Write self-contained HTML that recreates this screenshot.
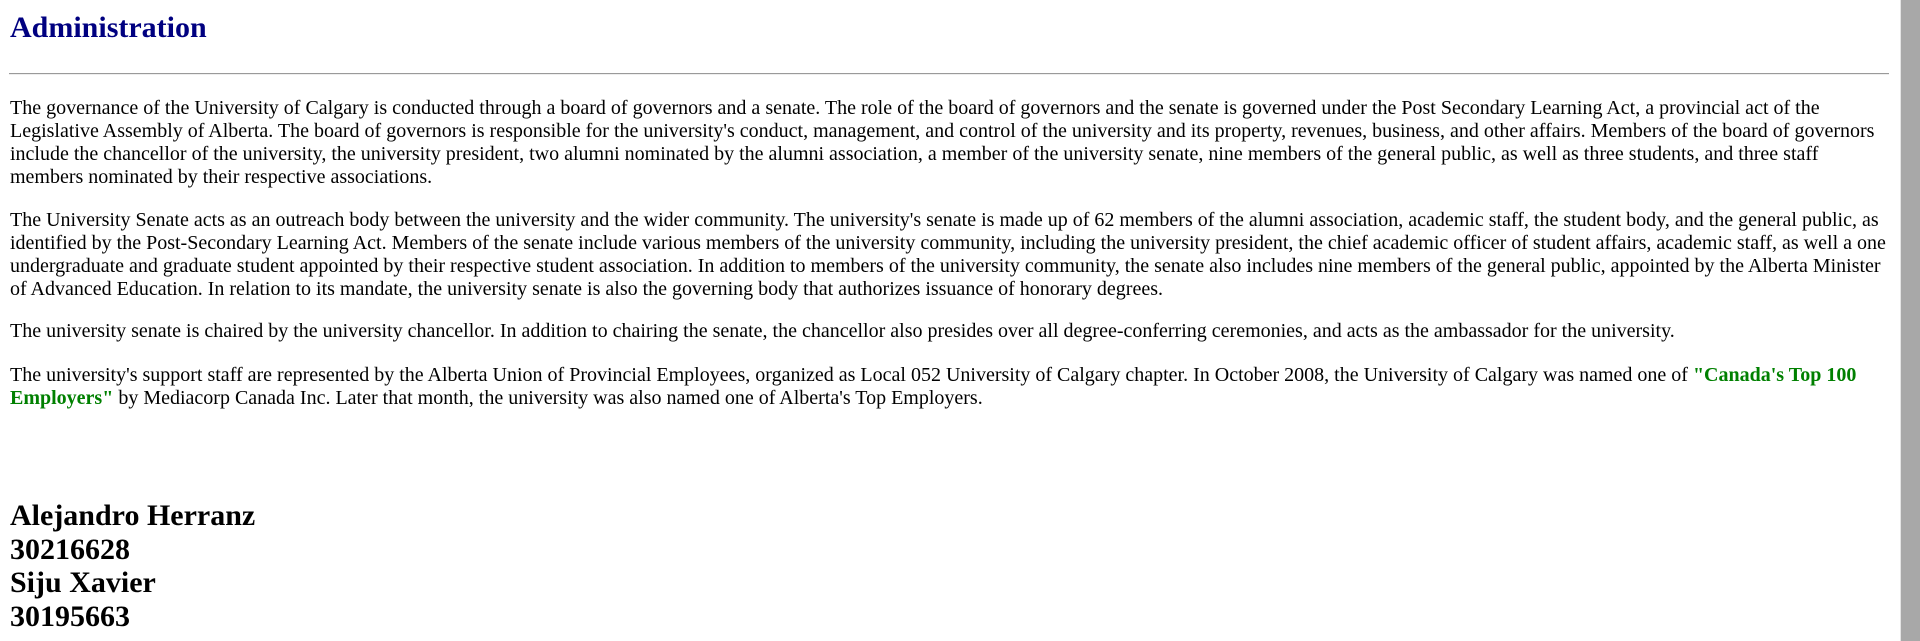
<!DOCTYPE html>
<html><head><meta charset="utf-8">
<style>
html,body{margin:0;padding:0;background:#fff;overflow:hidden;}
body{width:1920px;height:641px;position:relative;font-family:"Liberation Serif","Times New Roman",serif;color:#000;}
.c{position:absolute;left:10px;width:1880px;font-family:"Liberation Serif","Times New Roman",serif;}
h2{position:absolute;left:10px;top:10px;margin:0;font-size:30px;line-height:35px;color:#000080;font-weight:bold;font-family:"Liberation Serif",serif;}
.hr{position:absolute;left:9px;width:1880px;top:73px;height:0;border-top:1px solid #9a9a9a;border-bottom:1px solid #eee;}
p{margin:0;font-size:20px;line-height:23px;}
.g{color:#008000;font-weight:bold;}
.n{font-size:30px;line-height:33.5px;font-weight:bold;}
.sb{position:absolute;left:1900px;top:0;width:20px;height:641px;background:#a8a8a8;border-left:1px solid #e4e4e4;}
</style></head><body>
<h2>Administration</h2>
<div class="hr"></div>
<p class="c" style="top:97px">The governance of the University of Calgary is conducted through a board of governors and a senate. The role of the board of governors and the senate is governed under the Post Secondary Learning Act, a provincial act of the Legislative Assembly of Alberta. The board of governors is responsible for the university's conduct, management, and control of the university and its property, revenues, business, and other affairs. Members of the board of governors include the chancellor of the university, the university president, two alumni nominated by the alumni association, a member of the university senate, nine members of the general public, as well as three students, and three staff members nominated by their respective associations.</p>
<p class="c" style="top:209px">The University Senate acts as an outreach body between the university and the wider community. The university's senate is made up of 62 members of the alumni association, academic staff, the student body, and the general public, as identified by the Post-Secondary Learning Act. Members of the senate include various members of the university community, including the university president, the chief academic officer of student affairs, academic staff, as well a one undergraduate and graduate student appointed by their respective student association. In addition to members of the university community, the senate also includes nine members of the general public, appointed by the Alberta Minister of Advanced Education. In relation to its mandate, the university senate is also the governing body that authorizes issuance of honorary degrees.</p>
<p class="c" style="top:320px">The university senate is chaired by the university chancellor. In addition to chairing the senate, the chancellor also presides over all degree-conferring ceremonies, and acts as the ambassador for the university.</p>
<p class="c" style="top:364px">The university's support staff are represented by the Alberta Union of Provincial Employees, organized as Local 052 University of Calgary chapter. In October 2008, the University of Calgary was named one of <span class="g">"Canada's Top 100 Employers"</span> by Mediacorp Canada Inc. Later that month, the university was also named one of Alberta's Top Employers.</p>
<div class="c n" style="top:499px">Alejandro Herranz<br>30216628<br>Siju Xavier<br>30195663</div>
<div class="sb"></div>
</body></html>
